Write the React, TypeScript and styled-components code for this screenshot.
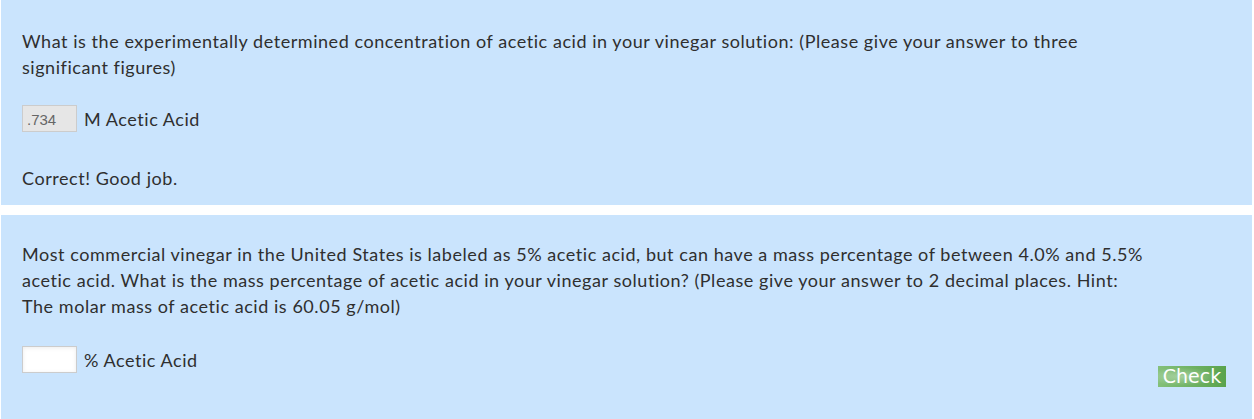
import styled, { createGlobalStyle } from "styled-components";

const Global = createGlobalStyle`
	html, body {
		margin: 0;
		padding: 0;
		background: #ffffff;
	}
	body {
		font-family: Lato, "Open Sans", sans-serif;
	}
`;

const Page = styled.div`
	display: flex;
	flex-direction: column;
	gap: 10px;
	padding: 0 2px 0 1px;
`;

const Panel = styled.section<{ $top: number; $bottom: number }>`
	background: #cae4fd;
	padding: ${(p) => p.$top}px 26px ${(p) => p.$bottom}px 21px;
	color: #2f2f2f;
	font-size: 18px;
	letter-spacing: 0.55px;
	line-height: 26px;
`;

const Question = styled.p`
	margin: 0;
	max-width: 1128px;
`;

const AnswerRow = styled.div<{ $gap: number }>`
	display: flex;
	align-items: center;
	gap: 7px;
	margin-top: ${(p) => p.$gap}px;
	height: 27px;
`;

const Field = styled.input`
	box-sizing: border-box;
	width: 55px;
	height: 27px;
	padding: 2px 4px 0;
	border: 1px solid #cccccc;
	font-family: "Liberation Sans", Arial, sans-serif;
	font-size: 15px;
	letter-spacing: 0;
	color: #666666;
	background: #ffffff;
	box-shadow: inset 0 1px 4px rgba(0, 0, 0, 0.08);
	outline: none;

	&:disabled {
		background: #e6e6e6;
		box-shadow: none;
	}
`;

const Unit = styled.span`
	font-size: 18px;
`;

const Feedback = styled.p`
	margin: 33px 0 0;
`;

const Footer = styled.div`
	display: flex;
	justify-content: flex-end;
	margin-top: -7px;
`;

const CheckButton = styled.button`
	border: none;
	padding: 0 2px;
	height: 21px;
	width: 68px;
	font-family: "DejaVu Sans", Verdana, sans-serif;
	font-size: 19px;
	letter-spacing: 0;
	line-height: 21px;
	color: #ffffff;
	background: radial-gradient(
			ellipse at 35% 50%,
			rgba(255, 255, 255, 0.35),
			rgba(255, 255, 255, 0) 60%
		),
		linear-gradient(90deg, #84c07a, #5aa34c);
	cursor: pointer;
`;

export default function App() {
	return (
		<>
			<Global />
			<Page>
				<Panel $top={28} $bottom={14}>
					<Question>
						What is the experimentally determined concentration of acetic acid in
						your vinegar solution: (Please give your answer to three significant
						figures)
					</Question>
					<AnswerRow $gap={25}>
						<Field disabled defaultValue=".734" />
						<Unit>M Acetic Acid</Unit>
					</AnswerRow>
					<Feedback>Correct! Good job.</Feedback>
				</Panel>
				<Panel $top={26} $bottom={32}>
					<Question>
						Most commercial vinegar in the United States is labeled as 5% acetic
						acid, but can have a mass percentage of between 4.0% and 5.5% acetic
						acid. What is the mass percentage of acetic acid in your vinegar
						solution? (Please give your answer to 2 decimal places. Hint: The molar
						mass of acetic acid is 60.05 g/mol)
					</Question>
					<AnswerRow $gap={27}>
						<Field />
						<Unit>% Acetic Acid</Unit>
					</AnswerRow>
					<Footer>
						<CheckButton>Check</CheckButton>
					</Footer>
				</Panel>
			</Page>
		</>
	);
}
